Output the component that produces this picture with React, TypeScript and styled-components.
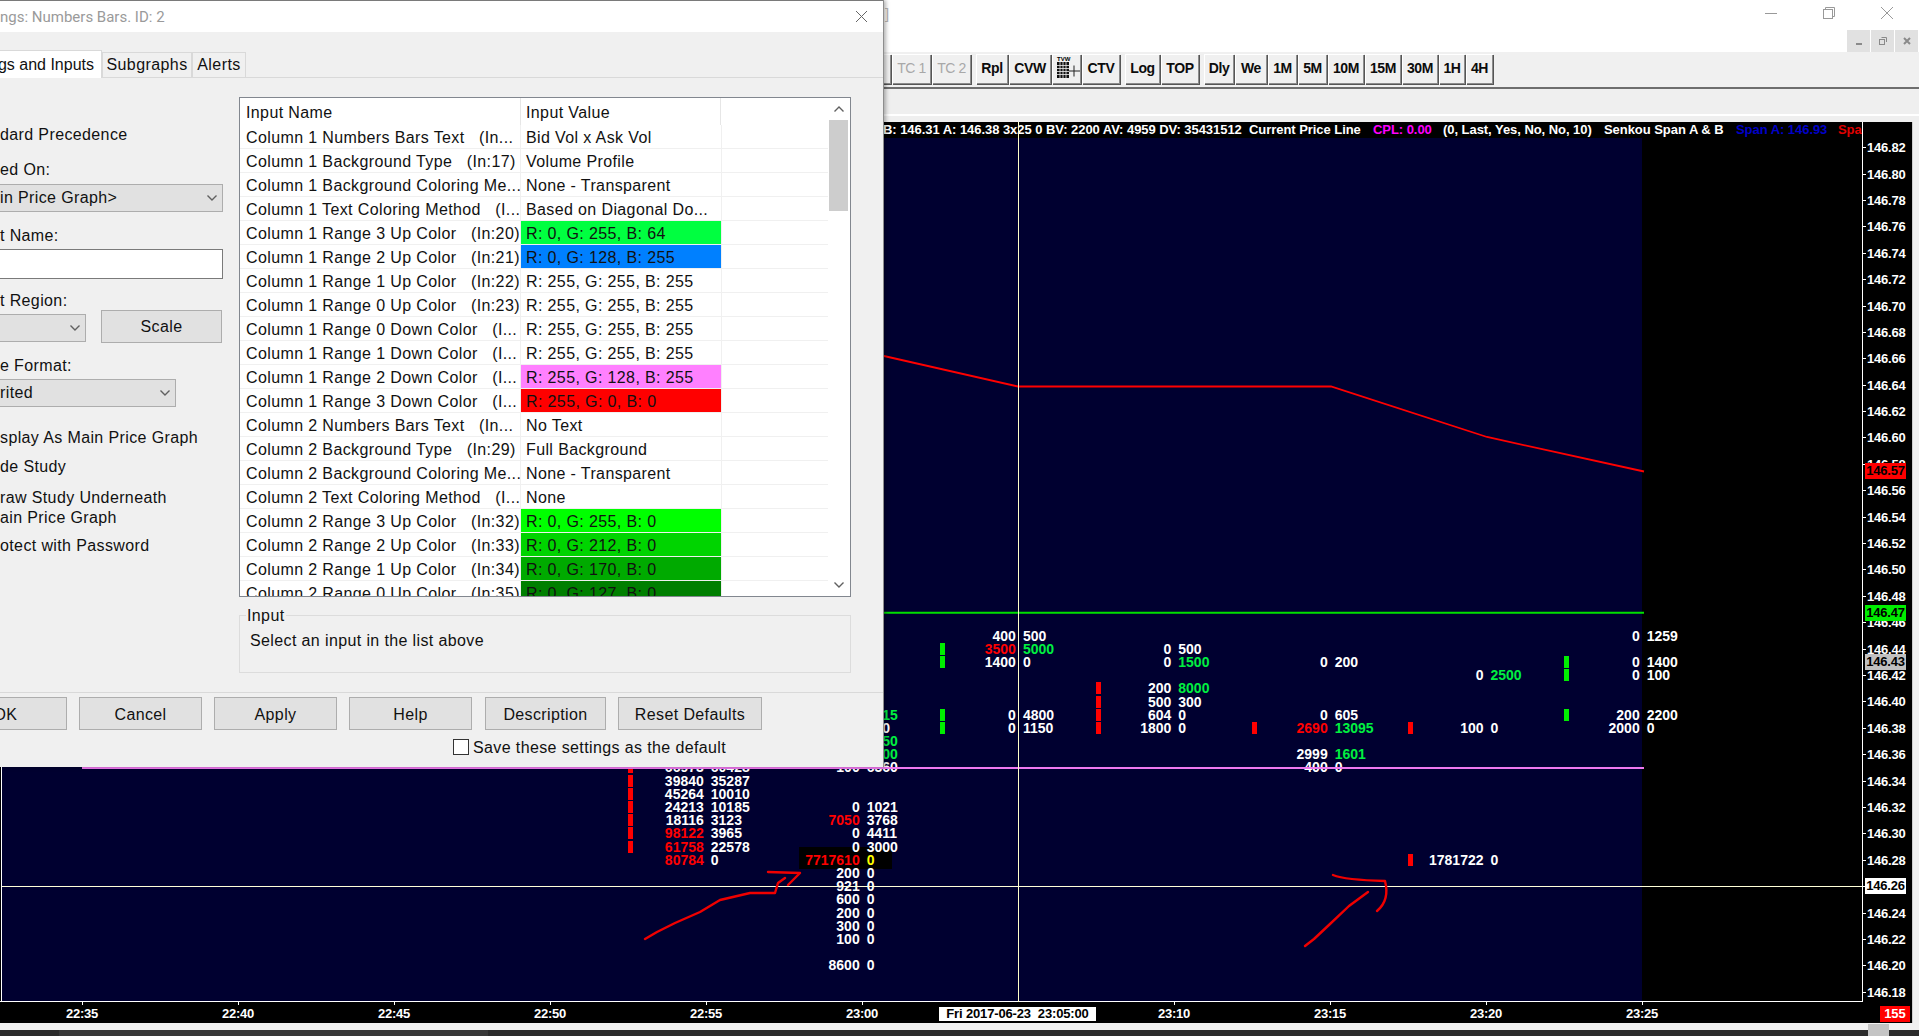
import React from 'react';
import styled, { createGlobalStyle } from 'styled-components';

const Global = createGlobalStyle`
  html, body { margin: 0; padding: 0; width: 1919px; height: 1036px; overflow: hidden; background: #fff; }
  #root { width: 1919px; height: 1036px; }
  * { box-sizing: border-box; }
`;

const Screen = styled.div`
  position: relative; width: 1919px; height: 1036px; overflow: hidden; display: flex; flex-direction: column;
  background: #f0f0f0; font-family: "Liberation Sans", Arial, sans-serif;
`;
/* ---------- main window chrome ---------- */
const TitleArea = styled.div`height: 52px; background: #fff; display: flex; flex-direction: column;`;
const CaptionRow = styled.div`height: 30px; display: flex; align-items: center; padding: 0 3px 4px 885px;`;
const StrayText = styled.span`color: #b5b5b5; font-size: 15px; flex: 1;`;
const CaptionBtn = styled.div`width: 58px; display: flex; justify-content: center; align-items: center;`;
const MdiRow = styled.div`height: 22px; display: flex; justify-content: flex-end; gap: 1px; padding-right: 1px;`;
const MdiBtn = styled.div`width: 23px; background: #e1e1e1; display: flex; align-items: center; justify-content: center;`;
const Toolbar = styled.div`
  height: 37px; border-bottom: 2px solid #6e6e6e; background: #f0f0f0; display: flex; align-items: flex-start;
  padding: 2px 0 0 860px; gap: 5px;
`;
const ToolGroup = styled.div`display: flex; gap: 1px;`;
const ToolBtn = styled.div<{ $w: number; $off?: boolean }>`
  width: ${p => p.$w}px; height: 30px; padding-bottom: 2px; display: flex; align-items: center; justify-content: center;
  background: #f0f0f0; box-shadow: inset 1px 1px 0 #fff, inset -1px -1px 0 #8c8c8c, 1px 1px 0 #555;
  color: ${p => (p.$off ? '#a8a8a8' : '#0c0c0c')}; font-size: 14px; font-weight: ${p => (p.$off ? 400 : 700)}; letter-spacing: -0.4px;
`;
const Strip = styled.div`height: 27px; background: #efefef; border-bottom: 2px solid #fff;`;
const Gutter = styled.div`height: 6px; background: #efefef;`;

/* ---------- chart ---------- */
const ChartRow = styled.div`height: 901px; display: flex;`;
const Canvas = styled.div`
  position: relative; width: 1912px; height: 901px; background: #000; display: grid;
  grid-template-columns: 1862px 50px; overflow: hidden;
`;
const ChartColumn = styled.div`display: flex; flex-direction: column; min-width: 0;`;
const InfoBar = styled.div`
  height: 16px; display: flex; align-items: center; padding-left: 883px; white-space: nowrap; overflow: hidden;
  font-size: 13px; font-weight: 700; letter-spacing: -0.05px; line-height: 16px;
`;
const InfoText = styled.span<{ $c?: string; $w: number }>`color: ${p => p.$c || '#fff'}; flex: none; width: ${p => p.$w}px;`;
const PlotRow = styled.div`flex: 1; display: flex; border-bottom: 1px solid #fff; padding-left: 1px;`;
const Plot = styled.div`width: 1641px; background: #000030; border-left: 1px solid #fff;`;
const TimeAxis = styled.div`height: 21px; flex: none;`;
const PriceAxis = styled.div`border-left: 1px solid #fff; height: 880px;`;
const SideStrip = styled.div`width: 7px; background: #f0f0f0; border-left: 1px solid #cfcfcf;`;
const ScrollStrip = styled.div`height: 7px; background: #f1f1f1;`;
const BottomBar = styled.div`height: 6px; background: #2b2b2b; display: flex; padding-left: 59px;`;
const BottomThumb = styled.div`width: 429px; background: #383838;`;
const CornerThumb = styled.div`position: absolute; left: 1868px; top: 1024px; width: 21px; height: 12px; background: #c4c4c4;`;

const Stage = styled.div`position: absolute; inset: 0; pointer-events: none;`;
const Overlay = styled.svg`position: absolute; left: 0; top: 0;`;
const Pair = styled.div`position: absolute; width: 0; height: 0; font-size: 14px; font-weight: 700; line-height: 14px;`;
const Bid = styled.span<{ $c?: string }>`position: absolute; right: 3.5px; top: -7px; white-space: nowrap; color: ${p => p.$c || '#fff'};`;
const Ask = styled.span<{ $c?: string }>`position: absolute; left: 3.5px; top: -7px; white-space: nowrap; color: ${p => p.$c || '#fff'};`;
const Marker = styled.div<{ $c: string }>`position: absolute; width: 5px; height: 12px; background: ${p => p.$c};`;
const Highlight = styled.div`position: absolute; left: 799px; top: 725px; width: 93px; height: 22px; background: #000;`;
const PriceLabel = styled.div`
  position: absolute; left: 1867px; color: #fff; font-size: 13px; font-weight: 700; line-height: 14px; letter-spacing: -0.2px;
  &::before { content: ''; position: absolute; left: -4px; top: 6px; width: 3px; height: 1px; background: #fff; }
`;
const PriceFlag = styled.div<{ $bg: string }>`
  position: absolute; left: 1865px; width: 41px; height: 16px; background: ${p => p.$bg}; color: #000; text-align: center;
  font-size: 13px; font-weight: 700; line-height: 16px; letter-spacing: -0.2px;
`;
const LastCount = styled.div`
  position: absolute; left: 1880px; top: 884px; width: 30px; height: 16px; background: #ff0000; color: #fff; text-align: center;
  font-size: 13px; font-weight: 700; line-height: 16px;
`;
const TimeLabel = styled.div`
  position: absolute; top: 885px; width: 0; display: flex; justify-content: center; color: #fff; white-space: nowrap;
  font-size: 13px; font-weight: 700; line-height: 14px; letter-spacing: -0.2px;
  &::before { content: ''; position: absolute; left: 0; top: -5px; width: 1px; height: 3px; background: #fff; }
`;
const DateLabel = styled.div`
  position: absolute; left: 939px; top: 885px; width: 157px; height: 14px; background: #fff; color: #000; text-align: center; white-space: pre;
  font-size: 13px; font-weight: 700; line-height: 14px; letter-spacing: -0.15px;
`;

/* ---------- dialog ---------- */
const Dialog = styled.div`
  position: absolute; left: 0; top: 0; width: 883px; height: 767px; background: #f0f0f0; display: flex; flex-direction: column;
  box-shadow: 1px 0 0 #8d8d8d, 3px 0 4px rgba(0,0,0,.3); color: #111;
  font-size: 16px; letter-spacing: 0.38px; overflow: hidden; z-index: 5;
`;
const DialogTitle = styled.div`
  height: 32px; flex: none; background: #fff; border-top: 1px solid #7a7a7a; display: flex; align-items: center; justify-content: space-between;
  padding-right: 15px; font-family: Roboto, sans-serif; font-size: 15px; letter-spacing: 0; color: #9a9a9a;
`;
const TabRow = styled.div`height: 46px; flex: none; display: flex; align-items: flex-end; border-bottom: 1px solid #d9d9d9;`;
const Tab = styled.div<{ $w: number; $active?: boolean }>`
  width: ${p => p.$w}px; height: ${p => (p.$active ? 28 : 25)}px; display: flex; align-items: center; white-space: nowrap;
  justify-content: ${p => (p.$active ? 'flex-end' : 'center')}; padding-right: ${p => (p.$active ? 7 : 0)}px;
  background: ${p => (p.$active ? '#fff' : '#f0f0f0')}; border: 1px solid #d9d9d9; border-left-width: ${p => (p.$active ? 0 : 1)}px;
  border-bottom: 0; margin-bottom: ${p => (p.$active ? -1 : 0)}px; position: relative;
  letter-spacing: ${p => (p.$active ? 0 : 0.42)}px;
`;
const DialogBody = styled.div`height: 615px; flex: none; display: grid; grid-template-columns: 239px 612px; border-bottom: 1px solid #d9d9d9;`;
const LeftPanel = styled.div`display: flex; flex-direction: column; white-space: nowrap;`;
const FieldLabel = styled.div<{ $mt: number }>`height: 20px; line-height: 21px; margin-top: ${p => p.$mt}px; flex: none;`;
const Combo = styled.div<{ $w: number; $mt: number }>`
  width: ${p => p.$w}px; height: 28px; margin-top: ${p => p.$mt}px; flex: none; background: #e1e1e1; border: 1px solid #adadad; border-left: 0;
  display: flex; align-items: center; justify-content: space-between; padding-right: 4px;
`;
const TextBox = styled.div`width: 223px; height: 30px; margin-top: 4px; flex: none; background: #fff; border: 1px solid #7a7a7a; border-left: 0;`;
const RegionRow = styled.div`height: 33px; display: flex; align-items: flex-start; gap: 15px; flex: none;`;
const Btn = styled.div<{ $w: number; $ml?: number }>`
  width: ${p => p.$w}px; height: 33px; flex: none; margin-left: ${p => p.$ml || 0}px; background: #e1e1e1; border: 1px solid #adadad;
  display: flex; align-items: center; justify-content: center; white-space: nowrap; padding-top: 1px;
`;
const RightPanel = styled.div`padding-top: 19px; display: flex; flex-direction: column;`;
const ListBox = styled.div`width: 612px; height: 500px; flex: none; border: 1px solid #82878f; background: #fff; display: flex; overflow: hidden;`;
const ListGrid = styled.div`width: 588px; flex: none; overflow: hidden;`;
const HeaderRow = styled.div`height: 27px; display: grid; grid-template-columns: 281px 200px 107px;`;
const HeaderCell = styled.div<{ $pl: number }>`padding-left: ${p => p.$pl}px; line-height: 29px; height: 27px; overflow: hidden; border-right: 1px solid #e6e6e6;`;
const DataRow = styled.div`height: 24px; display: grid; grid-template-columns: 281px 200px 107px; border-bottom: 1px solid #f0f0f0;`;
const NameCell = styled.div`padding-left: 6px; line-height: 25px; height: 23px; white-space: pre; overflow: hidden; border-right: 1px solid #f0f0f0;`;
const ValueCell = styled.div<{ $bg?: string }>`
  padding-left: 5px; line-height: 25px; height: 23px; white-space: nowrap; overflow: hidden; background: ${p => p.$bg || 'transparent'};
`;
const EmptyCell = styled.div`border-left: 1px solid #f0f0f0;`;
const VScroll = styled.div`width: 21px; flex: none; display: flex; flex-direction: column; align-items: center; position: relative;`;
const ArrowSlot = styled.div`height: 22px; width: 100%; display: flex; align-items: center; justify-content: center; flex: none;`;
const VThumb = styled.div`width: 19px; height: 91px; background: #cdcdcd; flex: none;`;
const VSpacer = styled.div`flex: 1;`;
const InputGroup = styled.fieldset`
  margin: 8px 0 0; padding: 4px 0 0 10px; width: 612px; height: 68px; border: 1px solid #dcdcdc; min-width: 0;
`;
const GroupLegend = styled.legend`padding: 0 1px; margin-left: -4px; line-height: 21px;`;
const GroupText = styled.div`line-height: 21px; white-space: nowrap;`;
const Footer = styled.div`flex: 1; display: flex; flex-direction: column;`;
const ButtonRow = styled.div`
  height: 33px; margin-top: 4px; display: flex; gap: 12px; flex: none;
  ${Btn} { padding-top: 3px; }
`;
const SaveRow = styled.div`height: 18px; margin-top: 8px; padding-left: 453px; display: flex; align-items: center; gap: 4px; white-space: nowrap; flex: none;`;
const SaveText = styled.span`padding-top: 1px;`;
const CheckBox = styled.div`width: 16px; height: 16px; background: #fff; border: 1px solid #333;`;

const Chevron = ({ d, w = 12, h = 8, stroke = '#606060' }: { d: 'up' | 'down'; w?: number; h?: number; stroke?: string }) => (
  <svg width={w} height={h} viewBox="0 0 12 8">
    <polyline points={d === 'up' ? '1.5,6.5 6,2 10.5,6.5' : '1.5,1.5 6,6 10.5,1.5'} fill="none" stroke={stroke} strokeWidth="1.4" />
  </svg>
);

type Cell = { n: string; v: string; bg?: string };
const rows: Cell[] = [
  { n: 'Column 1 Numbers Bars Text   (In...', v: 'Bid Vol x Ask Vol' },
  { n: 'Column 1 Background Type   (In:17)', v: 'Volume Profile' },
  { n: 'Column 1 Background Coloring Me...', v: 'None - Transparent' },
  { n: 'Column 1 Text Coloring Method   (I...', v: 'Based on Diagonal Do...' },
  { n: 'Column 1 Range 3 Up Color   (In:20)', v: 'R: 0, G: 255, B: 64', bg: '#00ff40' },
  { n: 'Column 1 Range 2 Up Color   (In:21)', v: 'R: 0, G: 128, B: 255', bg: '#0080ff' },
  { n: 'Column 1 Range 1 Up Color   (In:22)', v: 'R: 255, G: 255, B: 255' },
  { n: 'Column 1 Range 0 Up Color   (In:23)', v: 'R: 255, G: 255, B: 255' },
  { n: 'Column 1 Range 0 Down Color   (I...', v: 'R: 255, G: 255, B: 255' },
  { n: 'Column 1 Range 1 Down Color   (I...', v: 'R: 255, G: 255, B: 255' },
  { n: 'Column 1 Range 2 Down Color   (I...', v: 'R: 255, G: 128, B: 255', bg: '#ff80ff' },
  { n: 'Column 1 Range 3 Down Color   (I...', v: 'R: 255, G: 0, B: 0', bg: '#ff0000' },
  { n: 'Column 2 Numbers Bars Text   (In...', v: 'No Text' },
  { n: 'Column 2 Background Type   (In:29)', v: 'Full Background' },
  { n: 'Column 2 Background Coloring Me...', v: 'None - Transparent' },
  { n: 'Column 2 Text Coloring Method   (I...', v: 'None' },
  { n: 'Column 2 Range 3 Up Color   (In:32)', v: 'R: 0, G: 255, B: 0', bg: '#00ff00' },
  { n: 'Column 2 Range 2 Up Color   (In:33)', v: 'R: 0, G: 212, B: 0', bg: '#00d400' },
  { n: 'Column 2 Range 1 Up Color   (In:34)', v: 'R: 0, G: 170, B: 0', bg: '#00aa00' },
  { n: 'Column 2 Range 0 Up Color   (In:35)', v: 'R: 0, G: 127, B: 0', bg: '#007f00' },
];

const R = '#ff0000', G = '#00f040', Y = '#ffff00';
type Num = [number, number, string, string, string?, string?];
const X0 = 707.3, X1 = 863.2, X2 = 1019.4, X3 = 1174.8, X4 = 1331.2, X5 = 1487, X6 = 1643.2;
const nums: Num[] = [
  [X0, 767, '66973', '60428'], [X0, 780.7, '39840', '35287'], [X0, 793.7, '45264', '10010'], [X0, 806.7, '24213', '10185'],
  [X0, 819.7, '18116', '3123'], [X0, 832.7, '98122', '3965', R], [X0, 846.7, '61758', '22578', R], [X0, 859.7, '80784', '0', R],
  [X1, 715, '0', '1815', undefined, G], [X1, 728, '0', '100'], [X1, 741, '0', '1050', undefined, G], [X1, 754, '0', '1300', undefined, G],
  [X1, 767, '100', '6360'], [X1, 806.7, '0', '1021'], [X1, 819.7, '7050', '3768', R], [X1, 832.7, '0', '4411'], [X1, 846.7, '0', '3000'],
  [X1, 859.7, '7717610', '0', R, Y], [X1, 872.7, '200', '0'], [X1, 885.7, '921', '0'], [X1, 898.7, '600', '0'], [X1, 912.7, '200', '0'],
  [X1, 925.7, '300', '0'], [X1, 938.7, '100', '0'], [X1, 964.7, '8600', '0'],
  [X2, 636, '400', '500'], [X2, 649, '3500', '5000', R, G], [X2, 662, '1400', '0'], [X2, 715, '0', '4800'], [X2, 728, '0', '1150'],
  [X3, 649, '0', '500'], [X3, 662, '0', '1500', undefined, G], [X3, 688, '200', '8000', undefined, G], [X3, 701.7, '500', '300'],
  [X3, 715, '604', '0'], [X3, 728, '1800', '0'],
  [X4, 662, '0', '200'], [X4, 715, '0', '605'], [X4, 728, '2690', '13095', R, G], [X4, 754, '2999', '1601', undefined, G], [X4, 767, '400', '0'],
  [X5, 675, '0', '2500', undefined, G], [X5, 728, '100', '0'], [X5, 860, '1781722', '0'],
  [X6, 636, '0', '1259'], [X6, 662, '0', '1400'], [X6, 675, '0', '100'], [X6, 715, '200', '2200'], [X6, 728, '2000', '0'],
];
const MG = '#00ee00';
const markers: [number, number, string][] = [
  [628, 767, R], [628, 780.7, R], [628, 793.7, R], [628, 806.7, R], [628, 819.7, R], [628, 832.7, R], [628, 846.7, R],
  [940, 649, MG], [940, 662, MG], [940, 715, MG], [940, 728, MG],
  [1096, 688, R], [1096, 701.7, R], [1096, 715, R], [1096, 728, R],
  [1252, 728, R], [1408, 728, R], [1408, 860, R],
  [1564, 662, MG], [1564, 675, MG], [1564, 715, MG],
];
const TOP = 122;
const prices = Array.from({ length: 33 }, (_, i) => ({ t: (146.82 - i * 0.02).toFixed(2), y: 148.2 + i * 26.39 }));
const times = ['22:35', '22:40', '22:45', '22:50', '22:55', '23:00', '', '23:10', '23:15', '23:20', '23:25'];

export default function App() {
  return (
    <Screen>
      <Global />
      <TitleArea>
        <CaptionRow>
          <StrayText>]</StrayText>
          <CaptionBtn><svg width="14" height="14" viewBox="0 0 14 14"><line x1="1" y1="7.5" x2="13" y2="7.5" stroke="#999" /></svg></CaptionBtn>
          <CaptionBtn><svg width="14" height="14" viewBox="0 0 14 14" fill="none" stroke="#999"><rect x="1.5" y="3.5" width="9" height="9" /><path d="M3.5 3.5V1.5H12.5V10.5H10.5" /></svg></CaptionBtn>
          <CaptionBtn><svg width="14" height="14" viewBox="0 0 14 14" stroke="#999"><path d="M1 1L13 13M13 1L1 13" /></svg></CaptionBtn>
        </CaptionRow>
        <MdiRow>
          <MdiBtn><svg width="10" height="10" viewBox="0 0 10 10"><rect x="2" y="7" width="6" height="2" fill="#8a8a8a" /></svg></MdiBtn>
          <MdiBtn><svg width="10" height="10" viewBox="0 0 10 10" fill="none" stroke="#8a8a8a"><rect x="1.5" y="3.5" width="5" height="5" /><path d="M3.5 1.5H8.5V6" /></svg></MdiBtn>
          <MdiBtn><svg width="10" height="10" viewBox="0 0 10 10" stroke="#8a8a8a" strokeWidth="2"><path d="M2 2L8 8M8 2L2 8" /></svg></MdiBtn>
        </MdiRow>
      </TitleArea>
      <Toolbar>
        <ToolGroup>
          <ToolBtn $w={31}>c</ToolBtn>
          <ToolBtn $w={39} $off>TC 1</ToolBtn>
          <ToolBtn $w={39} $off>TC 2</ToolBtn>
        </ToolGroup>
        <ToolGroup>
          <ToolBtn $w={32}>Rpl</ToolBtn>
          <ToolBtn $w={42}>CVW</ToolBtn>
          <ToolBtn $w={29}>
            <svg width="26" height="26" viewBox="0 0 26 26">
              <text x="3" y="5.5" fontSize="6" fontWeight="700" fontFamily="Liberation Sans" fill="#000" letterSpacing="0">TVW</text>
              <rect x="3" y="7" width="12" height="16" fill="#111" />
              <path d="M3 10.5H15M3 13.5H15M3 16.5H15M3 19.5H15M6 7V23M9 7V23M12 7V23" stroke="#f0f0f0" strokeWidth="0.8" />
              <path d="M15 16H26M20 10.5V21.5" stroke="#222" strokeWidth="1" />
            </svg>
          </ToolBtn>
          <ToolBtn $w={38}>CTV</ToolBtn>
        </ToolGroup>
        <ToolGroup>
          <ToolBtn $w={35}>Log</ToolBtn>
          <ToolBtn $w={38}>TOP</ToolBtn>
        </ToolGroup>
        <ToolGroup>
          <ToolBtn $w={30}>Dly</ToolBtn>
          <ToolBtn $w={32}>We</ToolBtn>
          <ToolBtn $w={29}>1M</ToolBtn>
          <ToolBtn $w={29}>5M</ToolBtn>
          <ToolBtn $w={36}>10M</ToolBtn>
          <ToolBtn $w={36}>15M</ToolBtn>
          <ToolBtn $w={36}>30M</ToolBtn>
          <ToolBtn $w={26}>1H</ToolBtn>
          <ToolBtn $w={27}>4H</ToolBtn>
        </ToolGroup>
      </Toolbar>
      <Strip />
      <Gutter />
      <ChartRow>
        <Canvas>
          <ChartColumn>
            <InfoBar>
              <InfoText $w={366}>B: 146.31 A: 146.38 3x25 0 BV: 2200 AV: 4959 DV: 35431512</InfoText>
              <InfoText $w={124}>Current Price Line</InfoText>
              <InfoText $w={70} $c="#ff00ff">CPL: 0.00</InfoText>
              <InfoText $w={161}>(0, Last, Yes, No, No, 10)</InfoText>
              <InfoText $w={132}>Senkou Span A &amp; B</InfoText>
              <InfoText $w={102} $c="#0000c8">Span A: 146.93</InfoText>
              <InfoText $w={100} $c="#e00000">Span B: 146.57</InfoText>
            </InfoBar>
            <PlotRow><Plot /></PlotRow>
            <TimeAxis />
          </ChartColumn>
          <PriceAxis />
          <Stage>
            <Highlight />
            {markers.map(([x, y, c], i) => (
              <Marker key={i} $c={c} style={{ left: x, top: y - 6 - TOP }} />
            ))}
            {nums.map(([x, y, a, b, ca, cb], i) => (
              <Pair key={i} style={{ left: x, top: y - TOP }}>
                <Bid $c={ca}>{a}</Bid>
                <Ask $c={cb}>{b}</Ask>
              </Pair>
            ))}
            <Overlay width="1912" height="901" viewBox="0 122 1912 901">
              <line x1="82" y1="612.7" x2="1644" y2="612.7" stroke="#00e000" strokeWidth="2" />
              <line x1="82" y1="768" x2="1644" y2="768" stroke="#ee78ee" strokeWidth="2" />
              <polyline points="862,351 1018,386.5 1331,386.5 1487,437 1644,471.5" fill="none" stroke="#ff0000" strokeWidth="1.8" />
              <line x1="1018.5" y1="122" x2="1018.5" y2="1002" stroke="#ffffc8" strokeWidth="1" />
              <line x1="2" y1="886.5" x2="1862" y2="886.5" stroke="#ffffd8" strokeWidth="1" />
              <path d="M645 939L657 932L675 923L700 912L720 900L750 893L775 893L778 883L785 878M768 872L800 873L788 885" fill="none" stroke="#f00000" strokeWidth="2.4" strokeLinejoin="round" strokeLinecap="round" />
              <path d="M1305 946L1314 939L1330 924L1349 906L1368 892M1333 875Q1345 880 1385 881Q1390 900 1377 911" fill="none" stroke="#f00000" strokeWidth="2.4" strokeLinejoin="round" strokeLinecap="round" />
            </Overlay>
            {prices.map(p => (
              <PriceLabel key={p.t} style={{ top: p.y - 7 - TOP }}>{p.t}</PriceLabel>
            ))}
            <PriceFlag $bg="#ff0000" style={{ top: 463 - TOP }}>146.57</PriceFlag>
            <PriceFlag $bg="#00ee00" style={{ top: 605 - TOP }}>146.47</PriceFlag>
            <PriceFlag $bg="#c0c0c0" style={{ top: 654 - TOP }}>146.43</PriceFlag>
            <PriceFlag $bg="#ffffff" style={{ top: 878 - TOP }}>146.26</PriceFlag>
            <LastCount>155</LastCount>
            {times.map((t, i) => t && (
              <TimeLabel key={t} style={{ left: 82 + i * 156 }}>{t}</TimeLabel>
            ))}
            <DateLabel>{'Fri 2017-06-23  23:05:00'}</DateLabel>
          </Stage>
        </Canvas>
        <SideStrip />
      </ChartRow>
      <ScrollStrip />
      <BottomBar><BottomThumb /></BottomBar>
      <CornerThumb />

      <Dialog>
        <DialogTitle>
          <span>ngs: Numbers Bars. ID: 2</span>
          <svg width="13" height="13" viewBox="0 0 13 13" stroke="#666"><path d="M1 1L12 12M12 1L1 12" /></svg>
        </DialogTitle>
        <TabRow>
          <Tab $w={102} $active>gs and Inputs</Tab>
          <Tab $w={90}>Subgraphs</Tab>
          <Tab $w={54}>Alerts</Tab>
        </TabRow>
        <DialogBody>
          <LeftPanel>
            <FieldLabel $mt={46}>dard Precedence</FieldLabel>
            <FieldLabel $mt={15}>ed On:</FieldLabel>
            <Combo $w={223} $mt={5}>in Price Graph&gt;<Chevron d="down" /></Combo>
            <FieldLabel $mt={13}>t Name:</FieldLabel>
            <TextBox />
            <FieldLabel $mt={11}>t Region:</FieldLabel>
            <RegionRow>
              <Combo $w={86} $mt={4}><span /><Chevron d="down" /></Combo>
              <Btn $w={121}>Scale</Btn>
            </RegionRow>
            <FieldLabel $mt={12}>e Format:</FieldLabel>
            <Combo $w={176} $mt={4}>rited<Chevron d="down" /></Combo>
            <FieldLabel $mt={20}>splay As Main Price Graph</FieldLabel>
            <FieldLabel $mt={9}>de Study</FieldLabel>
            <FieldLabel $mt={11}>raw Study Underneath</FieldLabel>
            <FieldLabel $mt={0}>ain Price Graph</FieldLabel>
            <FieldLabel $mt={8}>otect with Password</FieldLabel>
          </LeftPanel>
          <RightPanel>
            <ListBox>
              <ListGrid>
                <HeaderRow>
                  <HeaderCell $pl={6}>Input Name</HeaderCell>
                  <HeaderCell $pl={5}>Input Value</HeaderCell>
                  <span />
                </HeaderRow>
                {rows.map(r => (
                  <DataRow key={r.n}>
                    <NameCell>{r.n}</NameCell>
                    <ValueCell $bg={r.bg}>{r.v}</ValueCell>
                    <EmptyCell />
                  </DataRow>
                ))}
              </ListGrid>
              <VScroll>
                <ArrowSlot><Chevron d="up" /></ArrowSlot>
                <VThumb />
                <VSpacer />
                <ArrowSlot><Chevron d="down" /></ArrowSlot>
              </VScroll>
            </ListBox>
            <InputGroup>
              <GroupLegend>Input</GroupLegend>
              <GroupText>Select an input in the list above</GroupText>
            </InputGroup>
          </RightPanel>
        </DialogBody>
        <Footer>
          <ButtonRow>
            <Btn $w={123} $ml={-56}>OK</Btn>
            <Btn $w={123}>Cancel</Btn>
            <Btn $w={123}>Apply</Btn>
            <Btn $w={123}>Help</Btn>
            <Btn $w={121} $ml={1}>Description</Btn>
            <Btn $w={144}>Reset Defaults</Btn>
          </ButtonRow>
          <SaveRow><CheckBox /><SaveText>Save these settings as the default</SaveText></SaveRow>
        </Footer>
      </Dialog>
    </Screen>
  );
}
